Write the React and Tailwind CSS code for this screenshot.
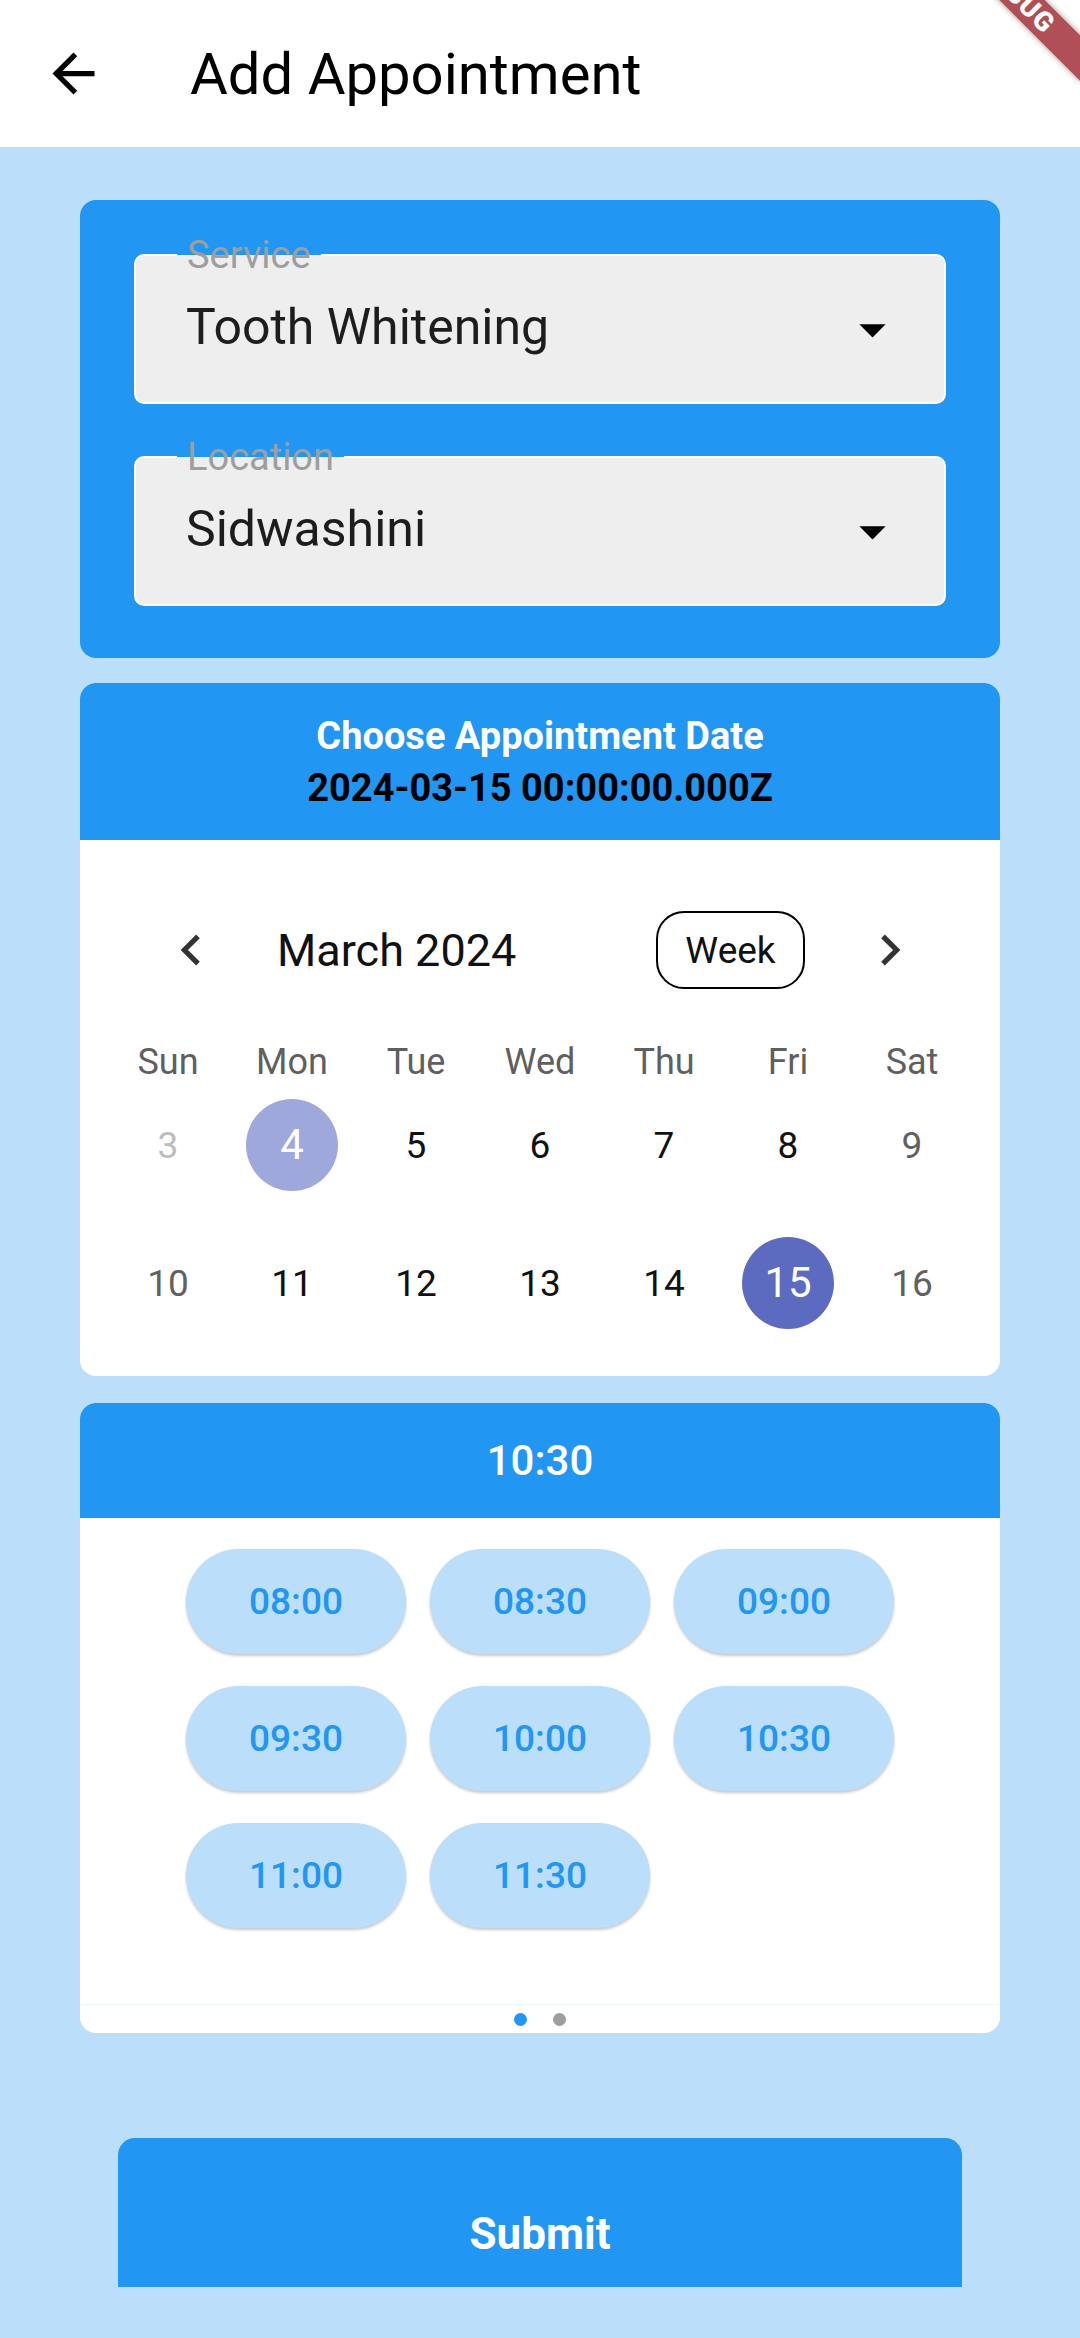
import React, { useState } from 'react';

const weekdays = ['Sun', 'Mon', 'Tue', 'Wed', 'Thu', 'Fri', 'Sat'];

const weeks = [
  [3, 4, 5, 6, 7, 8, 9],
  [10, 11, 12, 13, 14, 15, 16],
];

const slots = ['08:00', '08:30', '09:00', '09:30', '10:00', '10:30', '11:00', '11:30'];

const ArrowDrop = () => (
  <svg width="63" height="63" viewBox="0 0 24 24" className="mr-[40px] shrink-0">
    <path d="M7 10l5 5 5-5z" fill="#000" />
  </svg>
);

const Dropdown = ({ label, value }) => (
  <div className="relative h-[150px] rounded-[10px] border-2 border-white bg-[#EEEEEE] flex items-center">
    <span className="absolute top-[-20px] left-[41px] px-[10px] h-[38px] leading-[38px] text-[38px] text-[#9E9E9E] bg-[linear-gradient(to_bottom,#2196F3_50%,#EEEEEE_50%)]">
      {label}
    </span>
    <span className="flex-1 pl-[50px] pb-[4px] text-[50px] leading-none text-[#1d1d1d]">{value}</span>
    <ArrowDrop />
  </div>
);

const dayColor = (d, col) => {
  if (d === 3) return 'text-[#BDBDBD]';
  if (col === 0 || col === 6) return 'text-[#616161]';
  return 'text-[#111]';
};

export default function App() {
  const [selected, setSelected] = useState(15);
  const [slot, setSlot] = useState('10:30');

  return (
    <div className="relative w-[1080px] h-[2338px] overflow-hidden bg-[#BBDEFB] font-['Roboto',sans-serif]">
      {/* app bar */}
      <div className="h-[147px] bg-white flex items-center">
        <svg width="63" height="63" viewBox="0 0 24 24" className="ml-[42px]">
          <path d="M20 11H7.83l5.59-5.59L12 4l-8 8 8 8 1.41-1.41L7.83 13H20v-2z" fill="#000" />
        </svg>
        <h1 className="ml-[85px] text-[58px] leading-none text-black">Add Appointment</h1>
      </div>

      <div className="px-[80px] pt-[53px]">
        {/* service + location */}
        <div className="bg-[#2196F3] rounded-[16px] px-[54px] pt-[54px] pb-[52px] flex flex-col gap-[52px]">
          <Dropdown label="Service" value="Tooth Whitening" />
          <Dropdown label="Location" value="Sidwashini" />
        </div>

        {/* calendar */}
        <div className="mt-[25px] rounded-[16px] overflow-hidden bg-white">
          <div className="bg-[#2196F3] h-[157px] pt-[27px] text-center">
            <p className="text-[38px] leading-[52px] font-bold text-white">Choose Appointment Date</p>
            <p className="text-[38px] leading-[52px] font-bold text-black">2024-03-15 00:00:00.000Z</p>
          </div>
          <div className="pt-[71px] pb-[24px] px-[26px]">
            <div className="flex items-center h-[78px]">
              <svg width="62" height="62" viewBox="0 0 24 24" className="ml-[54px] shrink-0">
                <path d="M15.41 7.41L14 6l-6 6 6 6 1.41-1.41L10.83 12z" fill="#333" />
              </svg>
              <span className="ml-[55px] text-[45px] leading-none text-[#111]">March 2024</span>
              <div className="flex-1" />
              <button className="w-[149px] h-[78px] rounded-[28px] border-[2.5px] border-black text-[37px] leading-none text-[#111]">
                Week
              </button>
              <svg width="62" height="62" viewBox="0 0 24 24" className="ml-[54px] mr-[53px] shrink-0">
                <path d="M10 6L8.59 7.41 13.17 12l-4.58 4.59L10 18l6-6z" fill="#333" />
              </svg>
            </div>

            <div className="mt-[55px] grid grid-cols-7 h-[30px] items-center">
              {weekdays.map(w => (
                <span key={w} className="text-center text-[36px] leading-none text-[#5f5f5f]">{w}</span>
              ))}
            </div>

            <div className="pt-[2px]">
              {weeks.map((row, ri) => (
                <div key={ri} className="grid grid-cols-7 h-[138px]">
                  {row.map((d, ci) => {
                    const isSel = d === selected;
                    const isToday = d === 4;
                    return (
                      <div key={d} className="flex items-center justify-center">
                        {isSel ? (
                          <button onClick={() => setSelected(d)} className="w-[92px] h-[92px] rounded-full bg-[#5C6BC0] text-white text-[42px] leading-none flex items-center justify-center">{d}</button>
                        ) : isToday ? (
                          <button onClick={() => setSelected(d)} className="w-[92px] h-[92px] rounded-full bg-[#9FA8DA] text-white text-[42px] leading-none flex items-center justify-center">{d}</button>
                        ) : (
                          <button onClick={() => setSelected(d)} className={`text-[37px] leading-none ${dayColor(d, ci)}`}>{d}</button>
                        )}
                      </div>
                    );
                  })}
                </div>
              ))}
            </div>
          </div>
        </div>

        {/* time slots */}
        <div className="mt-[27px] rounded-[16px] overflow-hidden bg-white">
          <div className="bg-[#2196F3] h-[115px] flex items-center justify-center">
            <span className="text-[42px] font-medium text-white leading-none">{slot}</span>
          </div>
          <div className="pt-[31px] h-[486px] grid grid-cols-[repeat(3,220px)] auto-rows-[105px] content-start justify-center gap-x-[24px] gap-y-[32px]">
            {slots.map(s => (
              <button
                key={s}
                onClick={() => setSlot(s)}
                className="rounded-full bg-[#BBDEFB] text-[#2196F3] text-[37px] font-medium leading-none shadow-[0_2px_3px_rgba(0,0,0,0.22)]"
              >
                {s}
              </button>
            ))}
          </div>
          <div className="h-px bg-[#EAF4FC]" />
          <div className="h-[28px] flex items-center justify-center gap-[26px]">
            <span className="w-[13px] h-[13px] rounded-full bg-[#2196F3]" />
            <span className="w-[13px] h-[13px] rounded-full bg-[#9E9E9E]" />
          </div>
        </div>

        <button className="mt-[105px] ml-[38px] w-[844px] h-[149px] rounded-t-[17px] bg-[#2196F3] pt-[74px] flex justify-center">
          <span className="text-[44px] font-bold text-white leading-none">Submit</span>
        </button>
      </div>

      {/* debug banner */}
      <div className="absolute left-[913px] top-[-20px] w-[210px] h-[32px] rotate-45 bg-[#B04F55] shadow-[0_0_6px_rgba(0,0,0,0.4)] text-center text-white font-black text-[27px] leading-[32px] tracking-[1px]">
        DEBUG
      </div>
    </div>
  );
}
